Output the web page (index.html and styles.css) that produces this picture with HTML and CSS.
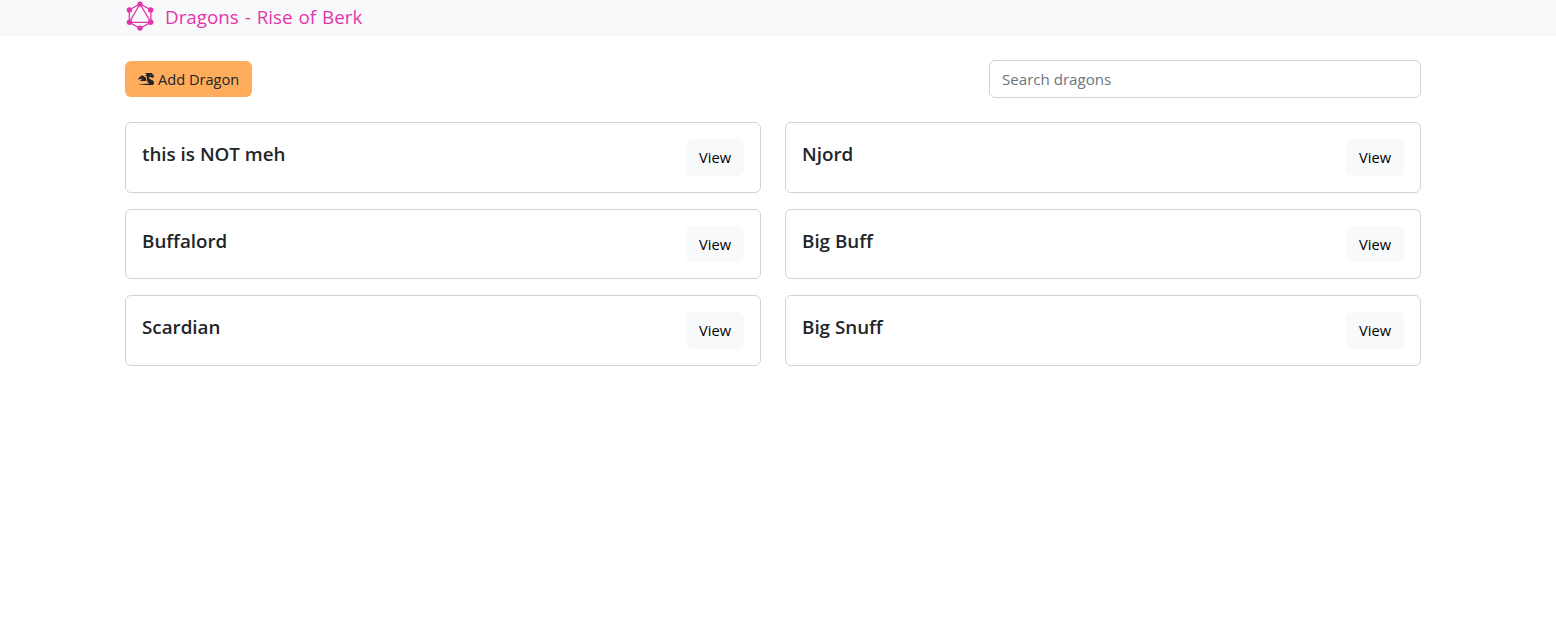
FILE: index.html
```html
<!DOCTYPE html>
<html lang="en">
<head>
<meta charset="utf-8">
<title>Dragons - Rise of Berk</title>
<link rel="stylesheet" href="styles.css">
</head>
<body>
<nav class="navbar">
  <a class="container brand">
    <svg class="logo" viewBox="0 0 30 32" width="30" height="32">
      <path d="M15 4 4.3 10v12.3L15 28.2l10.9-5.9V10zM15 4 4.3 22.3h21.6z" fill="none" stroke="#e535ab" stroke-width="1.3"/>
      <g fill="#e535ab"><circle cx="15" cy="4.1" r="2.7"/><circle cx="4.4" cy="10" r="2.7"/><circle cx="25.7" cy="10" r="2.7"/><circle cx="4.4" cy="22.2" r="2.7"/><circle cx="25.7" cy="22.2" r="2.7"/><circle cx="15" cy="28.1" r="2.7"/></g>
    </svg>
    <span class="brand-name">Dragons - Rise of Berk</span>
  </a>
</nav>
<main class="container">
  <div class="toolbar">
    <button class="btn btn-add">
      <svg class="dragon" viewBox="0 0 640 512" width="16" height="12.8"><path fill="currentColor" d="M18.32 255.78L192 223.96l-91.28 68.69c-10.08 10.08-2.94 27.31 11.31 27.31h222.7c-9.44-26.4-14.73-54.47-14.73-83.38v-42.27l-119.73-87.6c-23.82-15.88-55.29-14.01-77.06 4.59L5.81 227.64c-12.38 10.33-3.45 30.42 12.51 28.14zm556.87 34.1l-100.66-50.31A47.992 47.992 0 0 1 448 196.65v-36.69h64l28.09 22.63c6 6 14.14 9.37 22.63 9.37h30.97a32 32 0 0 0 28.62-17.69l14.31-28.62a32.005 32.005 0 0 0-3.02-33.51l-74.53-99.38C553.02 4.7 543.54 0 533.47 0H296.02c-7.13 0-10.7 8.57-5.66 13.61L352 63.96 292.42 88.8c-5.9 2.95-5.9 11.36 0 14.31L352 127.96v108.62c0 72.08 36.03 139.39 96 179.38-195.59 6.81-344.56 41.01-434.1 60.91C5.78 478.67 0 485.88 0 494.2 0 504 7.95 512 17.76 512h499.08c63.29.01 119.61-47.56 122.99-110.76 2.52-47.28-22.73-90.4-64.64-111.36zM489.18 66.25l45.65 11.41c-2.75 10.91-12.47 18.89-24.13 18.26-12.96-.71-25.85-12.53-21.52-29.67z"/></svg>
      <span>Add Dragon</span>
    </button>
    <input class="search" type="text" placeholder="Search dragons">
  </div>
  <div class="grid">
    <div class="card"><h5 class="name">this is NOT meh</h5><button class="btn btn-view">View</button></div>
    <div class="card"><h5 class="name">Njord</h5><button class="btn btn-view">View</button></div>
    <div class="card"><h5 class="name">Buffalord</h5><button class="btn btn-view">View</button></div>
    <div class="card"><h5 class="name">Big Buff</h5><button class="btn btn-view">View</button></div>
    <div class="card"><h5 class="name">Scardian</h5><button class="btn btn-view">View</button></div>
    <div class="card"><h5 class="name">Big Snuff</h5><button class="btn btn-view">View</button></div>
  </div>
</main>
</body>
</html>
```
FILE: styles.css
```css
*, *::before, *::after { box-sizing: border-box; }
body {
  margin: 0;
  background: #fff;
  color: #212529;
  font-family: "Open Sans", "Noto Sans", sans-serif;
  font-size: 15px;
}
.container { width: 1296px; margin: 0 0 0 125px; }
.navbar { height: 36px; background: #f8f9fa; }
.brand { display: flex; gap: 10px; color: #e535ab; }
.logo { flex: none; }
.brand-name { font-size: 18.8px; line-height: 34px; font-weight: 400; word-spacing: 1.1px; white-space: nowrap; }
.toolbar { display: flex; justify-content: space-between; align-items: center; padding: 24px 0; }
.btn {
  border: 0;
  border-radius: 6px;
  height: 36.4px;
  font: 400 14.6px/36px "Open Sans", "Noto Sans", sans-serif;
  padding: 0;
  white-space: nowrap;
}
.btn-add {
  display: flex;
  align-items: center;
  gap: 4px;
  width: 127px;
  padding-left: 13px;
  background: #ffad5c;
  color: #212529;
}
.search {
  width: 432px;
  height: 38px;
  padding: 0 12px;
  border: 1px solid #ced4da;
  border-radius: 6px;
  font: 400 15.1px "Open Sans", "Noto Sans", sans-serif;
}
.search::placeholder { color: #6c757d; opacity: 1; }
.grid { display: grid; grid-template-columns: 1fr 1fr; gap: 16px 24px; padding-top: .4px; }
.card {
  display: flex;
  justify-content: space-between;
  height: 70.4px;
  padding: 16px;
  border: 1px solid rgba(0, 0, 0, .176);
  border-radius: 6px;
}
.name { margin: 0; font-size: 18.8px; line-height: 30px; font-weight: 600; }
.btn-view { width: 58px; padding-bottom: .3px; background: #f8f9fa; color: #000; }
```
